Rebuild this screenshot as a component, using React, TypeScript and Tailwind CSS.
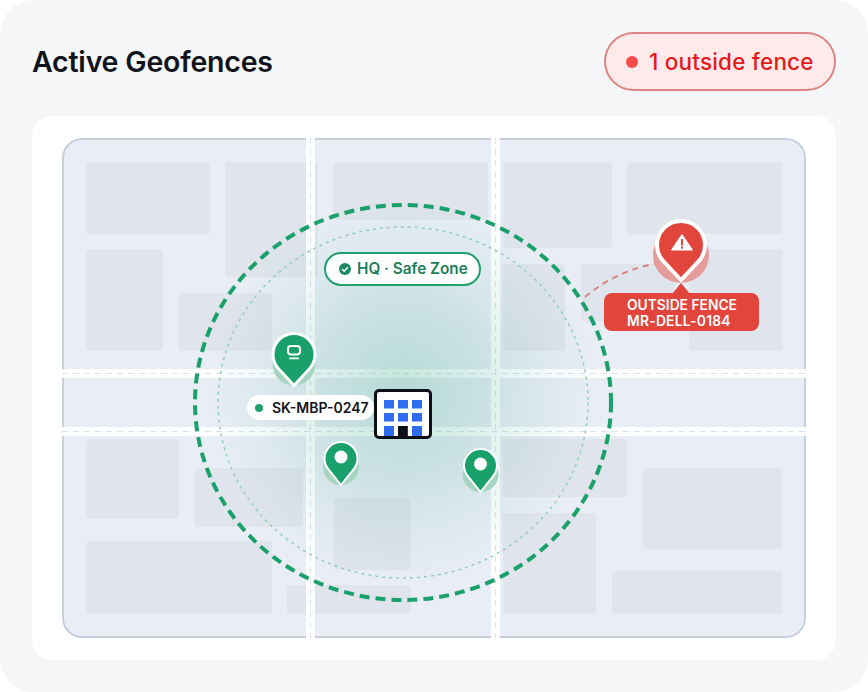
import React from 'react';

const blocks = [
  [86, 162, 124, 72], [225, 162, 93, 115], [333, 162, 155, 58], [503, 162, 109, 86], [627, 162, 155, 72],
  [86, 249, 77, 102], [179, 293, 93, 58], [503, 264, 62, 87], [581, 264, 93, 58], [689, 249, 93, 102],
  [86, 439, 93, 80], [195, 468, 108, 59], [334, 498, 77, 72], [86, 541, 186, 73], [287, 585, 124, 29],
  [503, 439, 124, 58], [503, 513, 93, 101], [643, 468, 139, 81], [612, 571, 170, 43],
];

const Pin: React.FC<{ cx: number; cy: number; r: number; tip: number; sw: number; fill: string; halo: string; haloY: number; haloR: number }> = ({ cx, cy, r, tip, sw, fill, halo, haloY, haloR }) => {
  const d = tip - cy;
  const px = r * Math.sqrt(1 - (r / d) ** 2);
  const py = cy + (r * r) / d;
  return (
    <g>
      <circle cx={cx} cy={haloY} r={haloR} fill={halo} />
      <path
        d={`M${cx} ${tip} L${cx - px} ${py} A${r} ${r} 0 1 1 ${cx + px} ${py} Z`}
        fill={fill}
        stroke="#fff"
        strokeWidth={sw}
        strokeLinejoin="miter"
      />
    </g>
  );
};

const MapDrawing = () => (
  <svg className="absolute inset-0 w-full h-full" viewBox="62 138 744 500">
    <defs>
      <radialGradient id="glow" gradientUnits="userSpaceOnUse" cx="403" cy="390" r="195">
        <stop offset="0" stopColor="#19a06c" stopOpacity="0.25" />
        <stop offset="0.4" stopColor="#1f9f80" stopOpacity="0.16" />
        <stop offset="0.7" stopColor="#1f9f80" stopOpacity="0.07" />
        <stop offset="1" stopColor="#1f9f80" stopOpacity="0" />
      </radialGradient>
    </defs>
    {blocks.map(([x, y, w, h], i) => (
      <rect key={i} x={x} y={y} width={w} height={h} rx="4" fill="#e0e4ec" />
    ))}
    <g fill="#fff" fillOpacity="0.92">
      <rect x="306" y="138" width="9" height="500" />
      <rect x="491" y="138" width="9" height="500" />
      <rect x="62" y="369" width="744" height="9" />
      <rect x="62" y="427" width="744" height="9" />
    </g>
    <g stroke="#dde2ef" strokeWidth="1" strokeDasharray="6 5" fill="none">
      <path d="M310.500 138V638" />
      <path d="M495.500 138V638" />
      <path d="M62 373.500H806" />
      <path d="M62 431.500H806" />
    </g>
    <ellipse cx="403" cy="400" rx="208" ry="198" fill="url(#glow)" />
    <ellipse cx="403" cy="402.500" rx="185" ry="175.500" fill="none" stroke="#8fd0b5" strokeWidth="1.500" strokeDasharray="3 4" />
    <ellipse cx="403" cy="402.500" rx="208" ry="197.500" fill="none" stroke="#1aa06b" strokeWidth="4" strokeDasharray="10 6" />
    <path d="M585 297C605 280 630 268 658 263" fill="none" stroke="#d9807f" strokeWidth="2" strokeDasharray="6 5" />

    <Pin cx={294} cy={354.5} r={21} tip={385.5} sw={3} fill="#1aa06b" halo="#a5d5c1" haloY={364} haloR={21.5} />
    <rect x="288" y="346" width="12" height="8.500" rx="3" fill="none" stroke="#fff" strokeWidth="2" />
    <rect x="289" y="357.500" width="10" height="1.800" rx="0.900" fill="#fff" />

    <Pin cx={341} cy={458.5} r={16.5} tip={485} sw={2} fill="#1aa06b" halo="#a5d5c1" haloY={467} haloR={18} />
    <circle cx="341" cy="457" r="6.500" fill="#fff" />
    <Pin cx={480.500} cy={465.5} r={16.5} tip={492} sw={2} fill="#1aa06b" halo="#a5d5c1" haloY={474} haloR={18} />
    <circle cx="480.500" cy="464" r="6.500" fill="#fff" />

    <Pin cx={681} cy={245} r={24} tip={280} sw={4} fill="#e2453b" halo="#e39c99" haloY={255} haloR={28} />
    <path d="M682 234.500L692.500 250H671.500Z" fill="#fff" stroke="#fff" strokeWidth="1" strokeLinejoin="round" />
    <rect x="681" y="239" width="2" height="6.500" fill="#e2453b" />
    <rect x="681" y="246.500" width="2" height="2.200" fill="#e2453b" />
    <path d="M681 283L672 294H690Z" fill="#e2453b" />
  </svg>
);

const Building = () => (
  <div className="absolute left-[312px] top-[251px] w-[58px] h-[50px] rounded-[5px] border-[3px] border-[#0d1117] bg-white">
    <svg className="w-full h-full" viewBox="377 392 52 44">
      {[384, 398, 412].map(x =>
        [400, 413, 426].map(y => (
          <rect key={`${x}-${y}`} x={x} y={y} width="10" height={y === 426 ? 10 : 8.5} fill="#2f6cf0" />
        ))
      )}
      <rect x="398" y="426" width="9.500" height="10" fill="#0d1117" />
    </svg>
  </div>
);

export default function App() {
  return (
    <div className="w-[868px] h-[692px] bg-white font-['Inter',sans-serif]">
      <div className="h-full rounded-[34px] bg-[#f4f6f8] px-8 pt-8">
        <div className="flex items-center justify-between h-[59px] mb-[25px]">
          <h2 className="text-[28.5px] font-semibold text-[#11141a] tracking-[-0.2px] mt-[1px]">Active Geofences</h2>
          <div className="flex items-center h-[59px] w-[232px] pl-[20px] gap-[11px] rounded-full border-2 border-[#dc8583] bg-[#feeaea]">
            <span className="w-3 h-3 rounded-full bg-[#f94c4c]" />
            <span className="text-[22.5px] font-medium tracking-[0.2px] text-[#e51a1a] leading-none mt-[1px]">1 outside fence</span>
          </div>
        </div>

        <div className="h-[544px] rounded-[20px] bg-white px-[30px] py-[22px]">
          <div className="relative h-[500px] rounded-[20px] bg-[#e9edf6] overflow-hidden">
            <div className="absolute inset-0 rounded-[20px] border-2 border-[#c9cedd]" />
            <MapDrawing />

            <div className="absolute left-[262px] top-[114px] w-[157px] h-[34px] flex items-center pl-[13px] gap-[6px] rounded-full border-2 border-[#1fa06c] bg-white text-[#1a7f5a]">
              <svg className="w-3 h-3" viewBox="0 0 12 12">
                <circle cx="6" cy="6" r="6" fill="#1a8a60" />
                <path d="M3.200 6.200L5.200 8.200L8.800 4.200" fill="none" stroke="#fff" strokeWidth="1.600" />
              </svg>
              <span className="text-[15.3px] font-semibold leading-none">HQ · Safe Zone</span>
            </div>

            <div className="absolute left-[185px] top-[257px] w-[127px] h-[25px] flex items-center pl-[8px] gap-[9px] rounded-full bg-white">
              <span className="w-2 h-2 rounded-full bg-[#1aa06b]" />
              <span className="text-[14px] font-semibold text-[#11141a] leading-none">SK-MBP-0247</span>
            </div>

            <Building />

            <div className="absolute left-[542px] top-[155px] w-[155px] h-[38px] rounded-lg bg-[#e2453b] pl-[23px] pt-[4px] text-[13.8px] leading-4 font-semibold text-white">
              <div>OUTSIDE FENCE</div>
              <div className="tracking-[0.25px]">MR-DELL-0184</div>
            </div>
          </div>
        </div>
      </div>
    </div>
  );
}
